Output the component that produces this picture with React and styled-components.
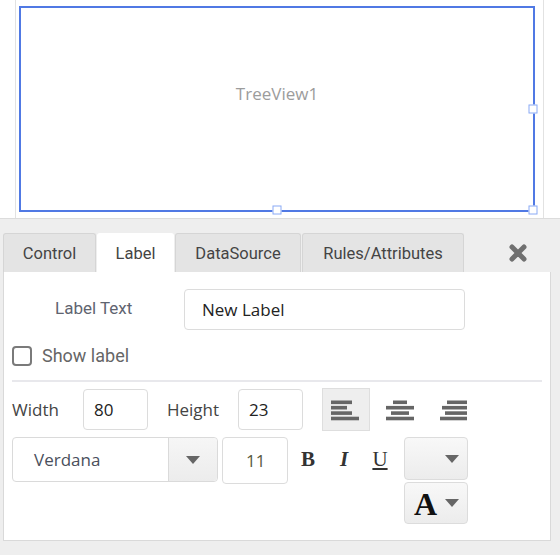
import styled, { createGlobalStyle } from "styled-components";

const GlobalStyle = createGlobalStyle`
  html, body {
    margin: 0;
    padding: 0;
    background: #ffffff;
    font-family: Roboto, "Open Sans", sans-serif;
  }
`;

const Page = styled.div`
  width: 560px;
  height: 555px;
  overflow: hidden;
  display: flex;
  flex-direction: column;
`;

const Canvas = styled.div`
  height: 218px;
  box-sizing: border-box;
  margin-left: 15px;
  width: 529px;
  border-left: 1px solid #e2e2e2;
  border-right: 1px solid #e2e2e2;
  padding: 6px 0 0 3px;
`;

const TreeBox = styled.div`
  position: relative;
  box-sizing: border-box;
  width: 516px;
  height: 206px;
  border: 2px solid #5079e4;
  display: flex;
  justify-content: center;
  padding-top: 74px;
  font-family: "Open Sans", sans-serif;
  font-size: 17px;
  color: #9c9c9c;
`;

const Handle = styled.span`
  position: absolute;
  width: 7px;
  height: 7px;
  background: #ffffff;
  border: 1px solid #8aaaf5;
  left: ${(p) => p.$x};
  top: ${(p) => p.$y};
  transform: translate(-50%, -50%);
`;

const Designer = styled.div`
  flex: 1;
  background: #eeeeee;
  border-top: 1px solid #dcdcdc;
  padding: 14px 10px 0 3px;
  display: flex;
  flex-direction: column;
`;

const TabBar = styled.div`
  display: flex;
  align-items: flex-end;
  gap: 1px;
  height: 39px;
`;

const Tab = styled.div`
  box-sizing: border-box;
  height: 39px;
  padding: 0 18px;
  display: flex;
  align-items: center;
  justify-content: center;
  width: ${(p) => p.$w}px;
  font-size: 16.5px;
  color: #444;
  background: ${(p) => (p.$active ? "#ffffff" : "#e4e4e4")};
  border: 1px solid ${(p) => (p.$active ? "#ffffff" : "#d5d5d5")};
  border-bottom: none;
  border-radius: 3px 3px 0 0;
`;

const Close = styled.div`
  margin-left: auto;
  margin-right: 22px;
  align-self: center;
  display: flex;
`;

const Panel = styled.div`
  box-sizing: border-box;
  width: 548px;
  height: 269px;
  background: #ffffff;
  border: 1px solid #d9d9d9;
  border-top: none;
  padding: 17px 8px 0 8px;
  display: flex;
  flex-direction: column;
`;

const LabelRow = styled.div`
  display: flex;
  align-items: center;
`;

const FieldLabel = styled.div`
  width: 172px;
  padding-left: 43px;
  box-sizing: border-box;
  font-size: 17px;
  color: #5f6470;
  margin-top: -4px;
`;

const TextInput = styled.div`
  box-sizing: border-box;
  width: ${(p) => p.$w}px;
  height: ${(p) => p.$h || 41}px;
  border: 1px solid #dcdcdc;
  border-radius: 4px;
  display: flex;
  align-items: center;
  padding-left: ${(p) => p.$pad || 10}px;
  font-family: "Open Sans", sans-serif;
  font-size: 17px;
  color: ${(p) => p.$color || "#222"};
`;

const CheckRow = styled.div`
  display: flex;
  align-items: center;
  gap: 10px;
  margin-top: 14px;
  font-size: 18px;
  color: #666;
`;

const Box = styled.span`
  box-sizing: border-box;
  width: 20px;
  height: 20px;
  border: 2px solid #7a7a7a;
  border-radius: 4px;
  margin-top: 2px;
`;

const Divider = styled.div`
  height: 2px;
  background: #e8e8ec;
  width: 530px;
  margin-top: 14px;
`;

const PropRow = styled.div`
  display: flex;
  align-items: ${(p) => p.$align || "center"};
  margin-top: ${(p) => p.$mt || 0}px;
`;

const PropLabel = styled.div`
  font-family: "Open Sans", sans-serif;
  font-size: 17px;
  color: #444;
  width: ${(p) => p.$w}px;
  margin-left: ${(p) => p.$ml || 0}px;
`;

const AlignGroup = styled.div`
  display: flex;
  margin-left: 19px;
  gap: 6px;
`;

const AlignBtn = styled.div`
  box-sizing: border-box;
  width: 48px;
  height: 43px;
  display: flex;
  align-items: center;
  justify-content: center;
  background: ${(p) => (p.$active ? "#eeeeee" : "transparent")};
  border: 1px solid ${(p) => (p.$active ? "#dedede" : "transparent")};
`;

const FontSelect = styled.div`
  box-sizing: border-box;
  width: 206px;
  height: 45px;
  border: 1px solid #dadada;
  border-radius: 4px;
  display: flex;
  align-items: stretch;
`;

const FontName = styled.div`
  flex: 1;
  display: flex;
  align-items: center;
  padding-left: 21px;
  font-family: "Open Sans", sans-serif;
  font-size: 17px;
  color: #4a4f5c;
`;

const Caret = styled.div`
  width: 48px;
  border-left: 1px solid #dadada;
  background: linear-gradient(#f6f6f6, #ececec);
  border-radius: 0 4px 4px 0;
  display: flex;
  align-items: center;
  justify-content: center;
`;

const StyleGroup = styled.div`
  display: flex;
  align-items: center;
  height: 45px;
  margin-left: 2px;
`;

const StyleBtn = styled.span`
  font-family: "Liberation Serif", serif;
  font-size: 21px;
  color: #333;
  width: 36px;
  text-align: center;
  font-weight: ${(p) => (p.$b ? 700 : 400)};
  font-style: ${(p) => (p.$i ? "italic" : "normal")};
  text-decoration: ${(p) => (p.$u ? "underline" : "none")};
  text-underline-offset: 2px;
`;

const ColorStack = styled.div`
  display: flex;
  flex-direction: column;
  gap: 2px;
  margin-left: 6px;
`;

const ColorBtn = styled.div`
  box-sizing: border-box;
  width: 64px;
  height: ${(p) => p.$h}px;
  border: 1px solid #dcdcdc;
  border-radius: 4px;
  background: linear-gradient(#f8f8f8, #ececec);
  display: flex;
  align-items: center;
  justify-content: flex-end;
  padding: 0 8px 0 9px;
`;

const BigA = styled.span`
  font-family: "Liberation Serif", serif;
  font-weight: 700;
  font-size: 32px;
  line-height: 1;
  color: #111;
  margin-top: 2px;
  margin-right: auto;
`;

const Arrow = () => (
  <svg width="14" height="8" viewBox="0 0 14 8">
    <path d="M0 0h14L7 8z" fill="#666" />
  </svg>
);

const AlignIcon = ({ rows }) => (
  <svg width="30" height="22" viewBox="0 0 30 22">
    {rows.map(([x, w], i) => (
      <rect key={i} x={x} y={1.5 + i * 5.4} width={w} height={3.6} fill="#666" />
    ))}
  </svg>
);

const App = () => (
  <Page>
    <GlobalStyle />
    <Canvas>
      <TreeBox>
        TreeView1
        <Handle $x="100%" $y="50%" />
        <Handle $x="50%" $y="100%" />
        <Handle $x="100%" $y="100%" />
      </TreeBox>
    </Canvas>
    <Designer>
      <TabBar>
        <Tab $w={93}>Control</Tab>
        <Tab $w={77} $active>Label</Tab>
        <Tab $w={126}>DataSource</Tab>
        <Tab $w={162}>Rules/Attributes</Tab>
        <Close>
          <svg width="20" height="20" viewBox="0 0 20 20">
            <path d="M4 4L16 16M16 4L4 16" stroke="#707070" strokeWidth="5" strokeLinecap="round" />
          </svg>
        </Close>
      </TabBar>
      <Panel>
        <LabelRow>
          <FieldLabel>Label Text</FieldLabel>
          <TextInput $w={281} $pad={17}>New Label</TextInput>
        </LabelRow>
        <CheckRow>
          <Box />
          Show label
        </CheckRow>
        <Divider />
        <PropRow $mt={6}>
          <PropLabel $w={71}>Width</PropLabel>
          <TextInput $w={65} $pad={10}>80</TextInput>
          <PropLabel $w={71} $ml={19}>Height</PropLabel>
          <TextInput $w={65} $pad={10}>23</TextInput>
          <AlignGroup>
            <AlignBtn $active>
              <AlignIcon rows={[[0, 21], [0, 16], [0, 21], [0, 28]]} />
            </AlignBtn>
            <AlignBtn>
              <AlignIcon rows={[[8, 14], [1, 28], [6, 18], [1, 28]]} />
            </AlignBtn>
            <AlignBtn>
              <AlignIcon rows={[[8, 20], [3, 25], [6, 22], [1, 27]]} />
            </AlignBtn>
          </AlignGroup>
        </PropRow>
        <PropRow $mt={6} $align="flex-start">
          <FontSelect>
            <FontName>Verdana</FontName>
            <Caret>
              <Arrow />
            </Caret>
          </FontSelect>
          <TextInput $w={66} $h={47} $pad={23} $color="#5a5a40" style={{ marginLeft: 4 }}>11</TextInput>
          <StyleGroup>
            <StyleBtn $b>B</StyleBtn>
            <StyleBtn $i $b>I</StyleBtn>
            <StyleBtn $u>U</StyleBtn>
          </StyleGroup>
          <ColorStack>
            <ColorBtn $h={43}>
              <Arrow />
            </ColorBtn>
            <ColorBtn $h={42}>
              <BigA>A</BigA>
              <Arrow />
            </ColorBtn>
          </ColorStack>
        </PropRow>
      </Panel>
    </Designer>
  </Page>
);

export default App;
